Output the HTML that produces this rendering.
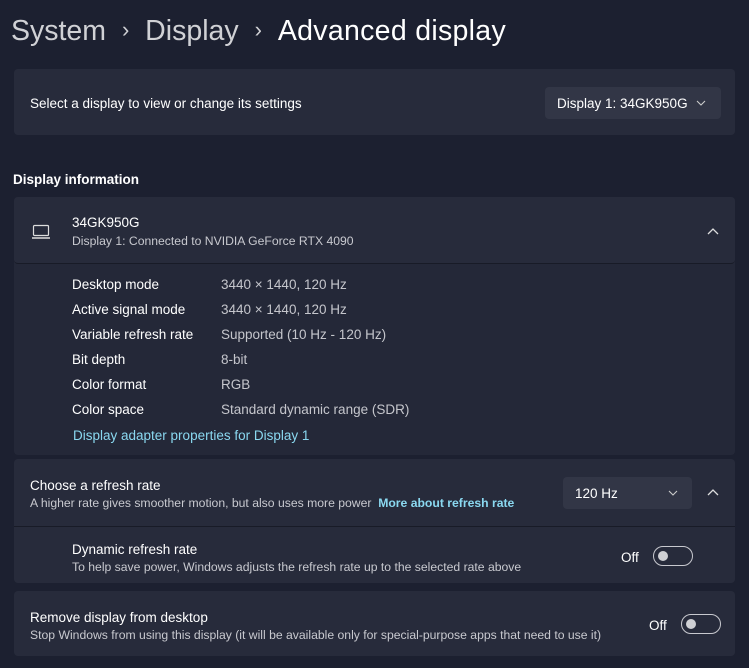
<!DOCTYPE html><html><head><style>
body{margin:0;width:749px;height:668px;background:#1c2030;font-family:"Liberation Sans",sans-serif;color:#fff;overflow:hidden;position:relative}
.a{position:absolute}
.card{position:absolute;left:14px;width:721px;background:#272b3b;border-radius:4px}
.t{font-size:13.5px;color:#fff}
.s{font-size:12.2px;color:#c8c9cf}
.dd{position:absolute;background:#323646;border-radius:4px}
.tog{position:absolute;width:40px;height:20px;border:1px solid #c8c9cf;border-radius:10px;box-sizing:border-box}
.tog:after{content:"";position:absolute;left:4px;top:4px;width:10px;height:10px;border-radius:50%;background:#cfd0d4}
.k{position:absolute;left:72px;font-size:13.5px;color:#fff}
.v{position:absolute;left:221px;font-size:13.5px;color:#c5c6cc}
</style></head><body>
<div class="a" style="left:11px;top:15px;font-size:28.5px;color:#d0d1d5;white-space:nowrap">System <span style="font-size:22px;margin:0 8px 0 8px;position:relative;top:-3px">›</span> Display <span style="font-size:22px;margin:0 8px 0 8px;position:relative;top:-3px">›</span> <span style="color:#fff;letter-spacing:0.3px">Advanced display</span></div>
<div class="card" style="top:69px;height:66px"></div>
<div class="a t" style="left:30px;top:96px">Select a display to view or change its settings</div>
<div class="dd" style="left:545px;top:87px;width:176px;height:32px"></div>
<div class="a t" style="left:557px;top:96px">Display 1: 34GK950G</div>
<svg class="a" style="left:696px;top:99px" width="10" height="8"><path d="M1 2L5 6L9 2" fill="none" stroke="#ccc" stroke-width="1.1"/></svg>
<div class="a" style="left:13px;top:172px;font-size:13.5px;font-weight:bold">Display information</div>
<div class="card" style="top:197px;height:258px;background:#242838"></div>
<div class="card" style="top:197px;height:66px;border-bottom:1px solid #181b27"></div>
<svg class="a" style="left:31px;top:224px" width="20" height="16" viewBox="0 0 20 16"><rect x="2.5" y="1.5" width="15" height="10" rx="1" fill="none" stroke="#ddd" stroke-width="1.2"/><line x1="1" y1="14" x2="19" y2="14" stroke="#ddd" stroke-width="1.4"/></svg>
<div class="a t" style="left:72px;top:215px">34GK950G</div>
<div class="a s" style="left:72px;top:234px">Display 1: Connected to NVIDIA GeForce RTX 4090</div>
<svg class="a" style="left:706px;top:226px" width="14" height="10"><path d="M2 8L7 3L12 8" fill="none" stroke="#ddd" stroke-width="1.3"/></svg>
<div class="k" style="top:277px">Desktop mode</div><div class="v" style="top:277px">3440 × 1440, 120 Hz</div>
<div class="k" style="top:302px">Active signal mode</div><div class="v" style="top:302px">3440 × 1440, 120 Hz</div>
<div class="k" style="top:327px">Variable refresh rate</div><div class="v" style="top:327px">Supported (10 Hz - 120 Hz)</div>
<div class="k" style="top:352px">Bit depth</div><div class="v" style="top:352px">8-bit</div>
<div class="k" style="top:377px">Color format</div><div class="v" style="top:377px">RGB</div>
<div class="k" style="top:402px">Color space</div><div class="v" style="top:402px">Standard dynamic range (SDR)</div>
<div class="a" style="left:73px;top:428px;font-size:13.5px;color:#8ad8f0">Display adapter properties for Display 1</div>
<div class="card" style="top:459px;height:124px;background:#272b3b"></div>
<div class="a" style="left:14px;top:526px;width:721px;height:1px;background:#181b27"></div>
<div class="a t" style="left:30px;top:478px">Choose a refresh rate</div>
<div class="a s" style="left:30px;top:496px">A higher rate gives smoother motion, but also uses more power &nbsp;<span style="color:#8ad8f0;font-weight:bold">More about refresh rate</span></div>
<div class="dd" style="left:563px;top:477px;width:129px;height:32px"></div>
<div class="a t" style="left:575px;top:486px">120 Hz</div>
<svg class="a" style="left:668px;top:489px" width="10" height="8"><path d="M1 2L5 6L9 2" fill="none" stroke="#ccc" stroke-width="1.1"/></svg>
<svg class="a" style="left:706px;top:487px" width="14" height="10"><path d="M2 8L7 3L12 8" fill="none" stroke="#ddd" stroke-width="1.3"/></svg>
<div class="a t" style="left:72px;top:542px">Dynamic refresh rate</div>
<div class="a s" style="left:72px;top:560px">To help save power, Windows adjusts the refresh rate up to the selected rate above</div>
<div class="a t" style="left:621px;top:550px">Off</div>
<div class="tog" style="left:653px;top:546px"></div>
<div class="card" style="top:591px;height:65px"></div>
<div class="a t" style="left:30px;top:610px">Remove display from desktop</div>
<div class="a s" style="left:30px;top:628px">Stop Windows from using this display (it will be available only for special-purpose apps that need to use it)</div>
<div class="a t" style="left:649px;top:618px">Off</div>
<div class="tog" style="left:681px;top:614px"></div>
</body></html>
